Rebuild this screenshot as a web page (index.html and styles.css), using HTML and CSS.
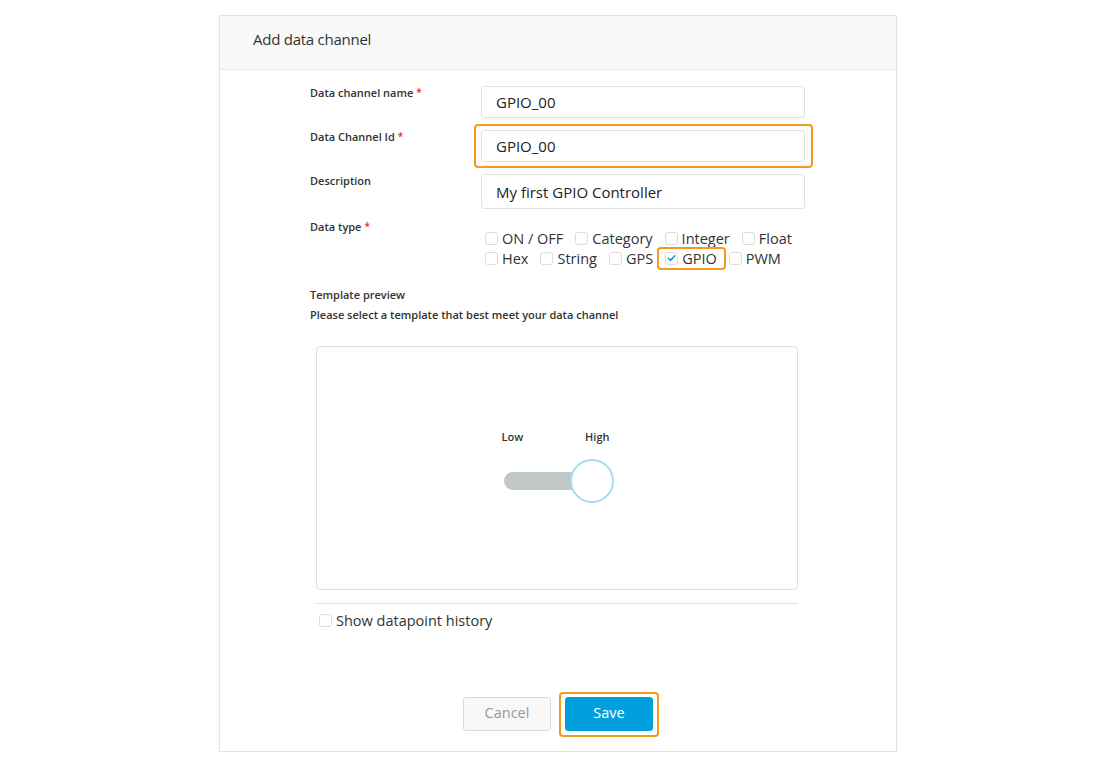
FILE: index.html
```html
<!DOCTYPE html>
<html>
<head>
<meta charset="utf-8">
<link rel="stylesheet" href="styles.css">
</head>
<body>
<div class="card">
  <div class="card-head">Add data channel</div>
  <div class="card-body">
    <div class="form">
      <div class="label">Data channel name<span class="req">*</span></div>
      <div class="field"><div class="input">GPIO_00</div></div>

      <div class="label">Data Channel Id<span class="req">*</span></div>
      <div class="field hl hl-input"><div class="input">GPIO_00</div></div>

      <div class="label">Description</div>
      <div class="field"><div class="input tall">My first GPIO Controller</div></div>

      <div class="label dt-label">Data type<span class="req">*</span></div>
      <div class="options">
        <div class="opt-row">
          <span class="opt"><span class="cb"></span>ON / OFF</span>
          <span class="opt"><span class="cb"></span>Category</span>
          <span class="opt"><span class="cb"></span>Integer</span>
          <span class="opt"><span class="cb"></span>Float</span>
        </div>
        <div class="opt-row">
          <span class="opt"><span class="cb"></span>Hex</span>
          <span class="opt"><span class="cb"></span>String</span>
          <span class="opt"><span class="cb"></span>GPS</span>
          <span class="opt hl hl-opt"><span class="cb checked"><svg viewBox="0 0 12 12" width="12" height="12"><path d="M2.6 6.3 L5 8.6 L9.6 3.6" fill="none" stroke="#1a9ad6" stroke-width="1.8" stroke-linecap="round" stroke-linejoin="round"/></svg></span>GPIO</span>
          <span class="opt"><span class="cb"></span>PWM</span>
        </div>
      </div>
    </div>

    <div class="tp-title">Template preview</div>
    <div class="tp-sub">Please select a template that best meet your data channel</div>

    <div class="preview">
      <div class="toggle">
        <div class="toggle-labels"><span>Low</span><span>High</span></div>
        <div class="toggle-track-wrap">
          <div class="toggle-track"></div>
          <div class="toggle-knob"></div>
        </div>
      </div>
    </div>

    <div class="sep"></div>

    <label class="history"><span class="cb"></span>Show datapoint history</label>

    <div class="actions">
      <button class="btn cancel">Cancel</button>
      <span class="hl hl-btn"><button class="btn save">Save</button></span>
    </div>
  </div>
</div>
</body>
</html>
```

FILE: styles.css
```css
* { box-sizing: border-box; }
body {
  margin: 0;
  background: #fff;
  font-family: "Open Sans", "Noto Sans", sans-serif;
  color: #333;
}
.card {
  margin: 15px 0 0 219px;
  width: 678px;
  border: 1px solid #e4e4e4;
  background: #fff;
}
.card-head {
  height: 54px;
  background: #f9f9f9;
  border-bottom: 1px solid #ebebeb;
  padding: 0 0 7px 33px;
  display: flex;
  align-items: center;
  font-size: 15px;
  color: #333;
  letter-spacing: -0.25px;
}
.card-body {
  padding: 16px 91px 20px 90px;
}
.form {
  display: grid;
  grid-template-columns: 171px 324px;
  row-gap: 12px;
}
.label {
  font-size: 11px;
  font-weight: 600;
  line-height: 14px;
  color: #333;
}
.req {
  color: #e02a2a;
  margin-left: 3px;
  font-size: 10px;
  vertical-align: top;
  position: relative;
  top: -1px;
}
.field { position: relative; }
.input {
  height: 32px;
  border: 1px solid #e2e2e2;
  border-radius: 3px;
  padding-left: 14px;
  display: flex;
  align-items: center;
  font-size: 15px;
  color: #222;
}
.input.tall { height: 35px; }
.hl { position: relative; }
.hl::after {
  content: "";
  position: absolute;
  border: 2px solid #f39a1e;
  border-radius: 4px;
  pointer-events: none;
}
.hl-input::after { top: -6px; bottom: -6px; left: -7px; right: -8px; }
.dt-label { margin-top: -1px; }
.options {
  padding-top: 8px;
  padding-left: 4px;
  margin-top: -1px;
}
.opt-row {
  display: flex;
  gap: 12px;
  height: 20px;
  align-items: center;
}
.opt {
  display: inline-flex;
  align-items: center;
  font-size: 14.5px;
  color: #333;
  white-space: nowrap;
}
.cb {
  width: 13px;
  height: 13px;
  border: 1px solid #dcdcdc;
  border-radius: 3px;
  margin-right: 4px;
  display: inline-flex;
  align-items: center;
  justify-content: center;
  background: #fff;
  flex: none;
}
.cb svg { display: block; }
.hl-opt::after { top: -2px; bottom: -2px; left: -8px; right: -9px; }
.tp-title {
  margin-top: 20px;
  font-size: 11px;
  font-weight: 600;
  line-height: 14px;
}
.tp-sub {
  margin-top: 6px;
  font-size: 11px;
  font-weight: 600;
  line-height: 14px;
}
.preview {
  margin: 24px 0 0 6px;
  width: 482px;
  height: 244px;
  border: 1px solid #dedede;
  border-radius: 4px;
  display: flex;
  align-items: center;
  justify-content: center;
}
.toggle {
  width: 112px;
  margin-top: -3px;
  margin-left: 1px;
}
.toggle-labels {
  display: flex;
  justify-content: space-between;
  font-size: 11px;
  font-weight: 600;
  line-height: 14px;
  padding-right: 4px;
}
.toggle-track-wrap {
  position: relative;
  height: 44px;
  margin-top: 15px;
  padding-top: 13px;
}
.toggle-track {
  margin-left: 2px;
  width: 77px;
  height: 18px;
  border-radius: 9px;
  background: #c1c6c9;
}
.toggle-knob {
  position: absolute;
  left: 68px;
  top: 0;
  width: 44px;
  height: 44px;
  border-radius: 50%;
  border: 2px solid #a3dcf3;
  background: #fff;
}
.sep {
  margin: 13px 0 0 6px;
  width: 482px;
  height: 1px;
  background: #e3e3e3;
}
.history {
  display: flex;
  align-items: center;
  margin: 7px 0 0 9px;
  height: 18px;
  font-size: 14.5px;
  color: #333;
}
.actions {
  margin-top: 68px;
  margin-left: -90px;
  margin-right: -91px;
  display: flex;
  justify-content: center;
  gap: 14px;
}
.btn {
  width: 88px;
  height: 34px;
  border-radius: 3px;
  font-family: "Open Sans", "Noto Sans", sans-serif;
  font-size: 14.5px;
  padding: 0 0 3px;
  cursor: pointer;
}
.cancel {
  background: #f8f8f8;
  border: 1px solid #d9d9d9;
  color: #999;
}
.save {
  background: #009fde;
  border: 1px solid #009fde;
  color: #fff;
  display: block;
}
.hl-btn { display: block; }
.hl-btn::after { top: -5px; bottom: -6px; left: -6px; right: -6px; }
```
